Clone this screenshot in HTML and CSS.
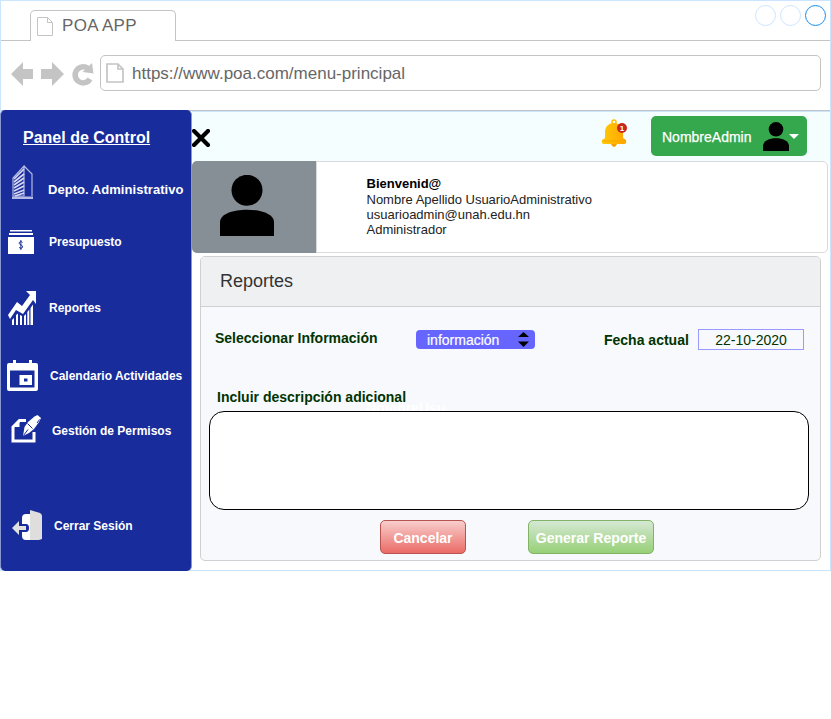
FILE: index.html
```html
<!DOCTYPE html>
<html lang="es">
<head>
<meta charset="utf-8">
<title>POA APP</title>
<link rel="stylesheet" href="styles.css">
</head>
<body>
<div class="window">
  <header class="chrome">
    <div class="tabs">
      <div class="tab">
        <svg class="tab-icon" width="16" height="19" viewBox="0 0 16 19"><path d="M.5.500H10.500L15.500 5.500V18.500H.5ZM10.500.5V5.500H15.500" fill="none" stroke="#c4c4c4"/></svg>
        <span class="tab-title">POA APP</span>
      </div>
      <div class="controls"><i></i><i></i><i class="active"></i></div>
    </div>
    <div class="toolbar">
      <svg class="nav" width="84" height="26" viewBox="0 0 84 26" fill="#c4c4c4">
        <path d="M0 13 12 1V8H22V18H12V25Z"/>
        <path d="M53 13 41 1V8H30V18H41V25Z"/>
        <path d="M79 18A8 8 0 1 1 77 7.500" fill="none" stroke="#c4c4c4" stroke-width="5.500"/>
        <path d="M81 2 82.500 12.500 71.500 11Z"/>
      </svg>
      <div class="address">
        <svg width="18" height="20" viewBox="0 0 18 20"><path d="M1 1H12L17 6V19H1ZM12 1V6H17" fill="none" stroke="#c4c4c4" stroke-width="1.700"/></svg>
        <span class="url">https://www.poa.com/menu-principal</span>
      </div>
    </div>
  </header>

  <div class="app">
    <nav class="sidebar">
      <h1>Panel de Control</h1>
      <ul>
        <li class="depto">
          <svg width="22" height="34" viewBox="0 0 22 34"><path d="M1 31V13L12 1V31ZM12 1 20 9V31" fill="none" stroke="#b4bae4" stroke-width="1.200"/><path d="M2 14 12 4M2 17 12 9M2 20 12 13M2 23 12 17M2 26 12 21M2 29 12 25M3 31 12 28" stroke="#d5d9f2" stroke-width="1.700"/><path d="M0 31.500H21V34H0Z" fill="#b4bae4"/></svg>
          <span>Depto. Administrativo</span>
        </li>
        <li class="presupuesto">
          <svg width="26" height="24" viewBox="0 0 26 24"><path d="M2 0H24V1.500H2ZM1 3H25V5H1ZM0 7H26V24H0Z" fill="#fff"/><path d="M14.500 12.500C13.500 11 11 11.500 11.200 13.300S14.800 14.800 14.600 16.800 11.800 18.600 11 17.200M12.900 10V20" fill="none" stroke="#182c9b"/></svg>
          <span>Presupuesto</span>
        </li>
        <li class="reportes">
          <svg width="28" height="34" viewBox="0 0 28 34" fill="#fff"><path d="M18 0H28V13L25 9 15 23 8 19 2 28 0 24 9 11 14 15 22 4Z"/><path d="M4 29 6 27V34H4ZM8 24 10 22.500V34H8ZM12 24 14 25V34H12ZM16 25 18 23V34H16ZM19.300 21 21.300 18.500V34H19.300ZM22.500 17 25 13.500V34H22.500Z"/></svg>
          <span>Reportes</span>
        </li>
        <li class="calendario">
          <svg width="31" height="31" viewBox="0 0 31 31"><path fill-rule="evenodd" fill="#fff" d="M6 0H9V3H22V0H25V3H29Q31 3 31 5V29Q31 31 29 31H2Q0 31 0 29V5Q0 3 2 3H6ZM3 10.500V27.500H27.500V10.500ZM12.500 15H25V25H12.500ZM17 18.500V21.500H20.500V18.500Z"/></svg>
          <span>Calendario Actividades</span>
        </li>
        <li class="permisos">
          <svg width="31" height="28" viewBox="0 0 31 28"><path d="M15 5.500H8.500L2 12V26H23V17" fill="none" stroke="#fff" stroke-width="3"/><path d="M.5 12 8.500 4V12Z" fill="#fff"/><path d="M12 21 13.500 12 17 7 23.500 1.500 26.500 0 30 3 28 7 23 14 18 18Z" fill="#fff"/><path d="M12.500 20.500 17 14.500M16.500 8.500 21.500 13.500M26 8 28.500 4.500" stroke="#182c9b" stroke-width="1"/></svg>
          <span>Gestión de Permisos</span>
        </li>
        <li class="cerrar">
          <svg width="31" height="31" viewBox="0 0 31 31"><path d="M10 8Q10 4 14 4H20V30H14Q10 30 10 26V22H14Q17 22 17 18T14 14H10Z" fill="#fff"/><path d="M18 0 28 3Q30 4 30 6V29L27 30H18Z" fill="#dedede"/><path d="M0 18 7 11V16H14V20H7V25Z" fill="#e0e0e0"/></svg>
          <span>Cerrar Sesión</span>
        </li>
      </ul>
    </nav>

    <main>
      <div class="topbar">
        <svg class="close" width="18" height="18" viewBox="0 0 18 18"><path d="M2 2 16 16M16 2 2 16" stroke="#000" stroke-width="4.200" stroke-linecap="round"/></svg>
        <svg class="bell" width="27" height="28" viewBox="0 0 27 28">
          <defs><linearGradient id="gold" x2="1"><stop stop-color="#ffca0a"/><stop offset="1" stop-color="#ffa400"/></linearGradient></defs>
          <circle cx="13" cy="3" r="2" fill="none" stroke="#ffc000" stroke-width="1.500"/><path d="M4 19V13C4 1 22 1 22 13V19L25 21Q26 25 23 25H3Q0 25 1 21Z" fill="url(#gold)"/><path d="M10 25H16Q15 28 13 28T10 25Z" fill="#f4a000"/><path d="M1.500 22H24.500" stroke="#f6a700"/>
          <circle cx="21" cy="9" r="5" fill="#c8281a"/><text x="21" y="12" text-anchor="middle" class="count">1</text>
        </svg>
        <div class="user">
          <span>NombreAdmin</span>
          <svg width="26" height="29" viewBox="0 0 26 29"><circle cx="13" cy="7.300" r="7.300"/><path d="M0 29V24C0 13.500 26 13.500 26 24V29Z"/></svg>
          <i class="caret"></i>
        </div>
      </div>

      <section class="profile">
        <div class="avatar"><svg width="54" height="61" viewBox="0 0 54 61"><circle cx="27" cy="15.300" r="15.500"/><path d="M0 61V47C0 30.500 54 30.500 54 47V61Z"/></svg></div>
        <div class="details">
          <b>Bienvenid@</b>
          <span class="name">Nombre Apellido UsuarioAdministrativo</span>
          <span class="mail">usuarioadmin@unah.edu.hn</span>
          <span class="role">Administrador</span>
        </div>
      </section>

      <section class="card">
        <h2>Reportes</h2>
        <div class="fields">
          <label class="info-label">Seleccionar Información</label>
          <div class="select"><span>información</span><svg width="11" height="15" viewBox="0 0 11 15"><path d="M0 5 5.500 0 11 5ZM0 9.500H11L5.500 15Z"/></svg></div>
          <label class="date-label">Fecha actual</label>
          <div class="date">22-10-2020</div>
        </div>
        <div class="description">
          <label>Incluir descripción adicional</label>
          <span class="ghost">NombreUsu</span>
          <div class="textarea"></div>
        </div>
        <div class="actions">
          <button class="cancel"><span>Cancelar</span></button>
          <button class="generate"><span>Generar Reporte</span></button>
        </div>
      </section>
    </main>
  </div>
</div>
</body>
</html>
```
FILE: styles.css
```css
* { box-sizing: border-box; }
body { margin: 0; background: #fff; font-family: "Liberation Sans", Arial, sans-serif; }
svg { display: block; flex: none; }
span, label { white-space: nowrap; }

.window { width: 831px; height: 571px; border: 1px solid #cce5ff; }
.chrome { height: 110px; border-bottom: 1px solid #c4c4c4; }
.tabs { height: 40px; border-bottom: 1px solid #c4c4c4; display: flex; justify-content: space-between; align-items: flex-end; padding-left: 29px; }
.tab { width: 146px; height: 31px; margin-bottom: -1px; border: 1px solid #c4c4c4; border-bottom: 0; border-radius: 5px 5px 0 0; background: #fff; display: flex; padding: 6px 0 0 6px; }
.tab-title { margin: -1px 0 0 9px; font-size: 17px; line-height: 19px; letter-spacing: .3px; color: #666; }
.controls { display: flex; gap: 4px; align-self: flex-start; padding: 4px 4px 0 0; }
.controls i { width: 21px; height: 21px; border: 1px solid #cce5ff; border-radius: 50%; }
.controls .active { border-color: #1a8cf0; }
.toolbar { display: flex; padding: 14px 9px 0 10px; }
.nav { margin-top: 6px; }
.address { flex: 1; height: 36px; margin-left: 5px; border: 1px solid #c4c4c4; border-radius: 5px; display: flex; align-items: center; padding-left: 5px; }
.url { margin: 1px 0 0 8px; font-size: 17px; color: #666; }

.app { display: flex; height: 460px; margin-left: -1px; }
.sidebar { width: 192px; height: 461px; flex: none; margin-top: -1px; background: #182c9b; border: 1px solid #8797d2; border-width: 0 1px 0 1px; border-radius: 5px; color: #fff; }
h1 { margin: 18px 0 0 22px; font-size: 16px; line-height: 20px; text-decoration: underline; }
ul { list-style: none; margin: 16px 0 0; padding: 0; font-size: 12px; font-weight: bold; }
li { display: flex; align-items: center; }
.depto { height: 50px; padding-left: 11px; gap: 14px; font-size: 13px; letter-spacing: .04px; }
.depto svg { margin-bottom: 14px; }
.presupuesto { height: 55px; padding-left: 7px; gap: 15px; }
.reportes { height: 77px; padding-left: 7px; gap: 13px; }
.calendario { height: 59px; padding-left: 6px; gap: 12px; }
.permisos { height: 51px; padding-left: 10px; gap: 10px; }
.permisos svg { margin-bottom: 4px; }
.cerrar { height: 50px; padding-left: 11px; gap: 11px; margin-top: 44px; }
.cerrar span { margin-top: 2px; }

main { flex: 1; }
.topbar { height: 50px; background: #f5feff; border-top: 1px solid #cce5ff; display: flex; }
.close { margin-top: 17px; }
.bell { margin: 7px 0 0 391px; }
.count { font-size: 8px; font-weight: bold; fill: #fff; }
.user { width: 156px; height: 40px; margin: 4px 0 0 22.5px; padding-left: 11.5px; background: #35a74c; border-radius: 5px; display: flex; align-items: center; color: #fff; font-size: 14px; -webkit-text-stroke: .25px #fff; }
.user span { margin-top: 2px; }
.user svg { margin: 0 0 0 12px; }
.caret { border: 5px solid transparent; border-top-color: #fff; border-bottom: 0; margin-left: 0; }

.profile { width: 636px; height: 92px; border: 1px solid #d7dadd; border-radius: 5px; display: flex; }
.avatar { width: 125px; height: 92px; margin: -1px 0 0 -1px; background: #868e96; border-right: 1px solid #d7dadd; border-radius: 5px 0 0 5px; padding: 14px 0 0 28px; }
.details { display: flex; flex-direction: column; padding: 14px 0 0 49.5px; font-size: 13px; line-height: 15px; color: #222; }
.details b { font-size: 13px; color: #000; line-height: 16px; }

.card { width: 621px; height: 305px; margin: 3px 0 0 8px; border: 1px solid #ced0d3; border-radius: 5px; background: #f7f9fc; }
h2 { margin: 0; height: 50px; padding-left: 19px; border-bottom: 1px solid #ced0d3; border-radius: 4px 4px 0 0; background: #eff0f2; color: #333; font-weight: normal; font-size: 18px; line-height: 48px; }
.fields { height: 66px; padding-top: 22px; display: flex; color: #030; font-size: 14px; }
.fields label, .description label { font-weight: bold; line-height: 18px; color: #030; }
.info-label { width: 215px; padding-left: 14px; }
.select { width: 119px; height: 19px; margin-top: 1px; padding: 0 6px 0 11px; background: #66f; border-radius: 4px; color: #fff; display: flex; align-items: center; justify-content: space-between; -webkit-text-stroke: .2px #fff; }
.select svg { -webkit-text-stroke: 0; }
.date-label { width: 94px; margin: 2px 0 0 69px; }
.date { width: 106px; height: 21px; border: 1px solid #99f; line-height: 20px; text-align: center; }
.description { position: relative; height: 137px; padding: 15px 0 0 8px; font-size: 14px; }
.description label { display: block; margin: 0 0 5px 8px; }
.ghost { position: absolute; left: 165px; top: 27px; color: #fff; font-weight: bold; }
.textarea { position: relative; width: 600px; height: 99px; border: 1px solid #000; border-radius: 15px; background: #fff; }
.actions { display: flex; gap: 62px; padding: 10px 0 0 179px; }
button { height: 34px; padding: 2px 0 0; border: 1px solid; border-radius: 5px; color: #fff; font: bold 14px "Liberation Sans", Arial, sans-serif; }
.cancel { width: 86px; border-color: #b85450; background: linear-gradient(#f8cecc, #ea6b66); }
.generate { width: 126px; border-color: #82b366; background: linear-gradient(#d5e8d4, #97d077); }
```
